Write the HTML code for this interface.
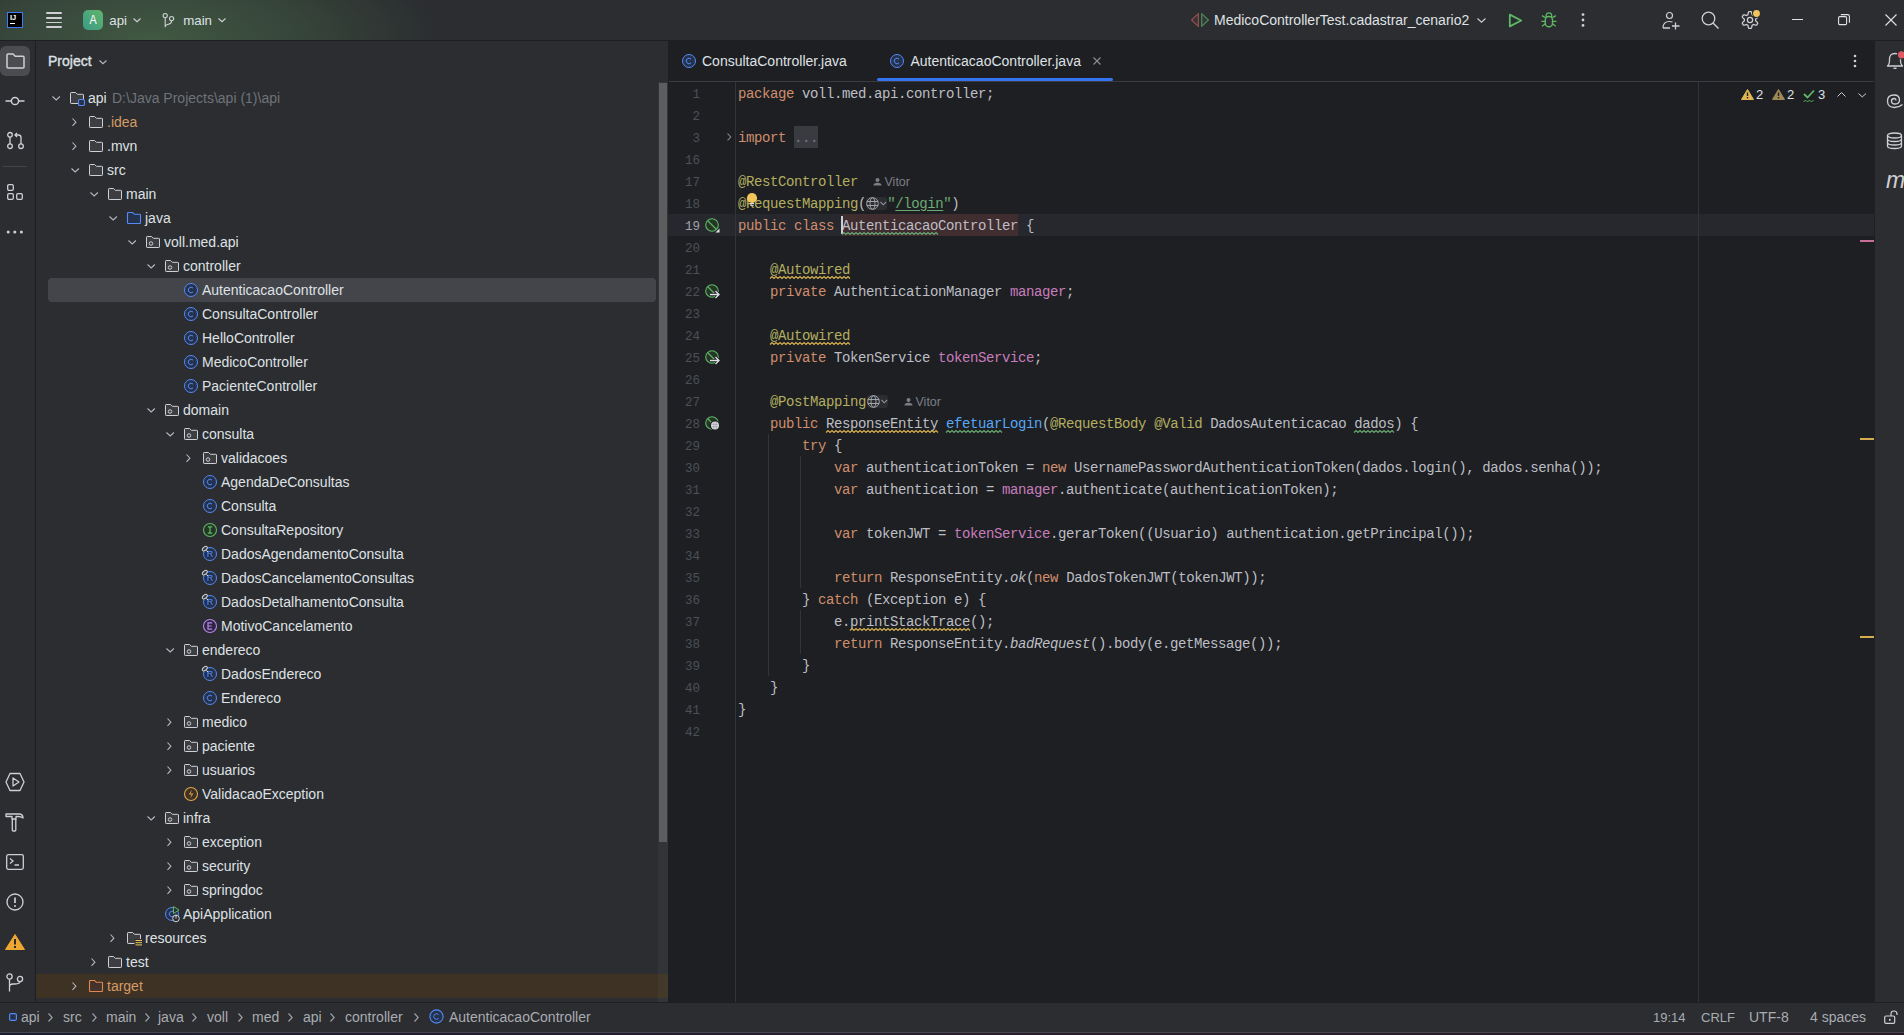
<!DOCTYPE html><html><head><meta charset="utf-8"><style>

html,body{margin:0;padding:0}
body{width:1904px;height:1035px;overflow:hidden;position:relative;background:#2B2D30;font-family:"Liberation Sans",sans-serif;font-size:14px;color:#DFE1E5}
.a{position:absolute}
.t{position:absolute;white-space:pre;line-height:16px}
svg{position:absolute;overflow:visible}
.code{position:absolute;font-family:"Liberation Mono",monospace;font-size:14px;letter-spacing:-0.4px;white-space:pre;line-height:22px;color:#BCBEC4}
.ln{position:absolute;font-family:"Liberation Mono",monospace;font-size:12.5px;white-space:pre;line-height:22px;color:#4B5059;text-align:right;width:40px}
.kw{color:#CF8E6D}.an{color:#B3AE60}.st{color:#6AAB73}.fd{color:#C77DBB}.md{color:#56A8F5}.it{font-style:italic}

</style></head><body>
<div class="a" style="left:0px;top:0px;width:1904px;height:40px;background:#2B2D30"></div>
<div class="a" style="left:0px;top:0px;width:900px;height:40px;background:radial-gradient(ellipse 290px 115px at 150px 40px, rgba(92,140,88,0.46) 0%, rgba(82,128,82,0.30) 50%, rgba(43,45,48,0) 100%)"></div>
<div class="a" style="left:0px;top:40px;width:1904px;height:1px;background:#1E1F22"></div>
<div class="a" style="left:7px;top:12px;width:16px;height:16px;background:#000;box-sizing:border-box;border:1.5px solid #3D7BF7"></div>
<div class="a" style="left:10px;top:13.5px;width:10px;height:8px;font-family:'Liberation Sans';font-weight:bold;font-size:7.5px;line-height:8px;color:#fff">IJ</div>
<div class="a" style="left:10px;top:23px;width:5px;height:1px;background:#fff"></div>
<div class="a" style="left:46px;top:12.2px;width:16px;height:1.7px;background:#CED0D6;border-radius:1px"></div>
<div class="a" style="left:46px;top:16.9px;width:16px;height:1.7px;background:#CED0D6;border-radius:1px"></div>
<div class="a" style="left:46px;top:21.5px;width:16px;height:1.7px;background:#CED0D6;border-radius:1px"></div>
<div class="a" style="left:46px;top:26.2px;width:16px;height:1.7px;background:#CED0D6;border-radius:1px"></div>
<div class="a" style="left:83px;top:10px;width:20px;height:20px;border-radius:5px;background:linear-gradient(45deg,#3A9B89,#62B46A)"></div>
<div class="t" style="left:83px;top:12px;width:20px;height:16px;text-align:center;color:#fff;font-size:13.5px;transform:scaleX(0.8)">A</div>
<div class="t" style="left:109.3px;top:12.5px;font-size:13.3px;color:#DFE1E5">api</div>
<svg style="left:133px;top:18px" width="8" height="4.0"><path d="M0.5 0.5 L4.0 3.7 L7.5 0.5" fill="none" stroke="#CED0D6" stroke-width="1.1"/></svg>
<svg style="left:161px;top:12px" width="16" height="16"><circle cx="4.2" cy="3.6" r="2.1" fill="none" stroke="#CED0D6" stroke-width="1.1"/><circle cx="10.6" cy="6.6" r="2.1" fill="none" stroke="#CED0D6" stroke-width="1.1"/><path d="M4.2 5.7 V15.2 M10.6 8.7 Q10.6 11.6 7.5 12.2 Q4.2 12.8 4.2 14.5" fill="none" stroke="#CED0D6" stroke-width="1.1"/></svg>
<div class="t" style="left:183.2px;top:12.5px;font-size:13.3px">main</div>
<svg style="left:218px;top:18px" width="8" height="4.0"><path d="M0.5 0.5 L4.0 3.7 L7.5 0.5" fill="none" stroke="#CED0D6" stroke-width="1.1"/></svg>
<svg style="left:1190px;top:12px" width="20" height="16"><path d="M8.3 1.6 L1.6 8 L8.3 14.4 Z" fill="#3A3132" stroke="#8E4F4D" stroke-width="1.3" stroke-linejoin="round"/><path d="M11.7 1.6 L18.4 8 L11.7 14.4 Z" fill="#2F3B32" stroke="#4F8257" stroke-width="1.3" stroke-linejoin="round"/></svg>
<div class="t" style="left:1214px;top:12px;">MedicoControllerTest.cadastrar_cenario2</div>
<svg style="left:1477px;top:18px" width="9" height="4.5"><path d="M0.5 0.5 L4.5 4.2 L8.5 0.5" fill="none" stroke="#CED0D6" stroke-width="1.1"/></svg>
<svg style="left:1508px;top:13px" width="15" height="15"><path d="M1.8 1.6 L13.2 7.5 L1.8 13.4 Z" fill="none" stroke="#5FB865" stroke-width="1.8" stroke-linejoin="round"/></svg>
<svg style="left:1541px;top:12px" width="16" height="16"><path d="M5 4.6 Q5 0.9 7.9 0.9 Q10.8 0.9 10.8 4.6 Z" fill="none" stroke="#5FB865" stroke-width="1.3" stroke-linejoin="round"/><rect x="4.3" y="4.4" width="7.2" height="10.4" rx="3.6" fill="none" stroke="#5FB865" stroke-width="1.4"/><path d="M0.4 9.3 H4.2 M11.6 9.3 H15.4 M1 3.6 L4.4 5.8 M14.8 3.6 L11.4 5.8 M1 14.2 L4.4 11.8 M14.8 14.2 L11.4 11.8" fill="none" stroke="#5FB865" stroke-width="1.3"/></svg>
<svg style="left:1577px;top:10px" width="12" height="20"><circle cx="6" cy="4.6" r="1.4" fill="#CED0D6"/><circle cx="6" cy="10" r="1.4" fill="#CED0D6"/><circle cx="6" cy="15.4" r="1.4" fill="#CED0D6"/></svg>
<svg style="left:1662px;top:11px" width="19" height="19"><circle cx="7.5" cy="4.5" r="3" fill="none" stroke="#CED0D6" stroke-width="1.2"/><path d="M1 17 Q1 10.5 7.5 10.5 Q9 10.5 10.5 11" fill="none" stroke="#CED0D6" stroke-width="1.2"/><path d="M1 17 H8 M13.5 11.5 V18.5 M10 15 H17.5" fill="none" stroke="#CED0D6" stroke-width="1.3"/></svg>
<svg style="left:1701px;top:11px" width="19" height="19"><circle cx="7.5" cy="7.5" r="6.3" fill="none" stroke="#CED0D6" stroke-width="1.3"/><path d="M12 12 L17.5 17.5" stroke="#CED0D6" stroke-width="1.4"/></svg>
<svg style="left:1741px;top:10px" width="19" height="20"><path d="M14.65 10.00 L14.65 10.20 L14.64 10.39 L14.62 10.59 L14.60 10.79 L14.83 11.03 L15.19 11.32 L15.57 11.64 L15.95 11.99 L16.29 12.37 L16.59 12.76 L16.74 13.13 L16.63 13.40 L16.50 13.66 L16.37 13.92 L16.23 14.17 L16.08 14.42 L15.92 14.67 L15.76 14.91 L15.58 15.14 L15.19 15.19 L14.70 15.13 L14.20 15.02 L13.71 14.87 L13.24 14.71 L12.81 14.53 L12.48 14.45 L12.32 14.57 L12.16 14.68 L11.99 14.79 L11.83 14.89 L11.65 14.99 L11.48 15.08 L11.30 15.16 L11.12 15.24 L11.02 15.56 L10.96 16.02 L10.87 16.51 L10.75 17.01 L10.59 17.50 L10.40 17.96 L10.16 18.27 L9.87 18.30 L9.58 18.33 L9.29 18.34 L9.00 18.35 L8.71 18.34 L8.42 18.33 L8.13 18.30 L7.84 18.27 L7.60 17.96 L7.41 17.50 L7.25 17.01 L7.13 16.51 L7.04 16.02 L6.98 15.56 L6.88 15.24 L6.70 15.16 L6.52 15.08 L6.35 14.99 L6.18 14.89 L6.01 14.79 L5.84 14.68 L5.68 14.57 L5.52 14.45 L5.19 14.53 L4.76 14.71 L4.29 14.87 L3.80 15.02 L3.30 15.13 L2.81 15.19 L2.42 15.14 L2.24 14.91 L2.08 14.67 L1.92 14.42 L1.77 14.17 L1.63 13.92 L1.50 13.66 L1.37 13.40 L1.26 13.13 L1.41 12.76 L1.71 12.37 L2.05 11.99 L2.43 11.64 L2.81 11.32 L3.17 11.03 L3.40 10.79 L3.38 10.59 L3.36 10.39 L3.35 10.20 L3.35 10.00 L3.35 9.80 L3.36 9.61 L3.38 9.41 L3.40 9.21 L3.17 8.97 L2.81 8.68 L2.43 8.36 L2.05 8.01 L1.71 7.63 L1.41 7.24 L1.26 6.87 L1.37 6.60 L1.50 6.34 L1.63 6.08 L1.77 5.82 L1.92 5.58 L2.08 5.33 L2.24 5.09 L2.42 4.86 L2.81 4.81 L3.30 4.87 L3.80 4.98 L4.29 5.13 L4.76 5.29 L5.19 5.47 L5.52 5.55 L5.68 5.43 L5.84 5.32 L6.01 5.21 L6.17 5.11 L6.35 5.01 L6.52 4.92 L6.70 4.84 L6.88 4.76 L6.98 4.44 L7.04 3.98 L7.13 3.49 L7.25 2.99 L7.41 2.50 L7.60 2.04 L7.84 1.73 L8.13 1.70 L8.42 1.67 L8.71 1.66 L9.00 1.65 L9.29 1.66 L9.58 1.67 L9.87 1.70 L10.16 1.73 L10.40 2.04 L10.59 2.50 L10.75 2.99 L10.87 3.49 L10.96 3.98 L11.02 4.44 L11.12 4.76 L11.30 4.84 L11.48 4.92 L11.65 5.01 L11.83 5.11 L11.99 5.21 L12.16 5.32 L12.32 5.43 L12.48 5.55 L12.81 5.47 L13.24 5.29 L13.71 5.13 L14.20 4.98 L14.70 4.87 L15.19 4.81 L15.58 4.86 L15.76 5.09 L15.92 5.33 L16.08 5.58 L16.23 5.82 L16.37 6.08 L16.50 6.34 L16.63 6.60 L16.74 6.87 L16.59 7.24 L16.29 7.63 L15.95 8.01 L15.57 8.36 L15.19 8.68 L14.83 8.97 L14.60 9.21 L14.62 9.41 L14.64 9.61 L14.65 9.80 Z" fill="none" stroke="#CED0D6" stroke-width="1.25" stroke-linejoin="round"/><circle cx="9" cy="10" r="2.6" fill="none" stroke="#CED0D6" stroke-width="1.25"/><circle cx="15.5" cy="3.5" r="4.4" fill="#2B2D30"/><circle cx="15.5" cy="3.5" r="3.4" fill="#F2C55C"/></svg>
<div class="a" style="left:1792px;top:19px;width:10.5px;height:1.2px;background:#DFE1E5"></div>
<svg style="left:1838px;top:14px" width="12" height="12"><rect x="0.6" y="2.6" width="8" height="8" rx="1.2" fill="none" stroke="#DFE1E5" stroke-width="1.1"/><path d="M2.8 0.6 H9.5 Q11.4 0.6 11.4 2.5 V8.8" fill="none" stroke="#DFE1E5" stroke-width="1.1"/></svg>
<svg style="left:1885px;top:14px" width="12" height="12"><path d="M0.5 0.5 L11.5 11.5 M11.5 0.5 L0.5 11.5" stroke="#DFE1E5" stroke-width="1.1"/></svg>
<div class="a" style="left:35px;top:41px;width:1px;height:962px;background:#1E1F22"></div>
<div class="a" style="left:0px;top:46px;width:30px;height:30px;background:#4A4C50;border-radius:6px"></div>
<svg style="left:6px;top:53px" width="19" height="16"><path d="M1 2 Q1 1 2 1 H7 L9.3 3.3 H17 Q18 3.3 18 4.3 V14 Q18 15 17 15 H2 Q1 15 1 14 Z" fill="none" stroke="#CED0D6" stroke-width="1.5"/></svg>
<svg style="left:5px;top:93px" width="20" height="16"><circle cx="10" cy="8" r="3.6" fill="none" stroke="#CED0D6" stroke-width="1.5"/><path d="M0.5 8 H6.4 M13.6 8 H19.5" stroke="#CED0D6" stroke-width="1.5"/></svg>
<svg style="left:7px;top:132px" width="18" height="18"><circle cx="3" cy="2.8" r="2.3" fill="none" stroke="#CED0D6" stroke-width="1.3"/><circle cx="3" cy="14.2" r="2.3" fill="none" stroke="#CED0D6" stroke-width="1.3"/><circle cx="14" cy="14.2" r="2.3" fill="none" stroke="#CED0D6" stroke-width="1.3"/><path d="M3 5.1 V11.9 M14 11.9 V5.5 Q14 3 11.5 3 H8 M10 1 L8 3 L10 5" fill="none" stroke="#CED0D6" stroke-width="1.3"/></svg>
<div class="a" style="left:3px;top:166px;width:24px;height:1px;background:#43454A"></div>
<svg style="left:7px;top:184px" width="17" height="17"><rect x="0.7" y="0.7" width="5.6" height="5.6" rx="1.2" fill="none" stroke="#CED0D6" stroke-width="1.3"/><rect x="0.7" y="9.7" width="5.6" height="5.6" rx="1.2" fill="none" stroke="#CED0D6" stroke-width="1.3"/><rect x="9.7" y="9.7" width="5.6" height="5.6" rx="1.2" fill="none" stroke="#CED0D6" stroke-width="1.3"/></svg>
<svg style="left:0px;top:226px" width="30" height="12"><circle cx="8.2" cy="6" r="1.5" fill="#CED0D6"/><circle cx="14.8" cy="6" r="1.5" fill="#CED0D6"/><circle cx="21.4" cy="6" r="1.5" fill="#CED0D6"/></svg>
<svg style="left:5px;top:772px" width="20" height="20"><path d="M5 1.5 H15 L19 10 L15 18.5 H5 L1 10 Z" fill="none" stroke="#CED0D6" stroke-width="1.3" stroke-linejoin="round"/><path d="M8 6 L14 10 L8 14 Z" fill="none" stroke="#CED0D6" stroke-width="1.3" stroke-linejoin="round"/></svg>
<svg style="left:5px;top:813px" width="19" height="19"><path d="M1 1 H14 Q18 1 18 5 Q16 3.5 13 3.5 H11 V6 H7 V3.5 H1 Z" fill="none" stroke="#CED0D6" stroke-width="1.3" stroke-linejoin="round"/><path d="M7.3 6 V17 Q7.3 18 8.3 18 H9.8 Q10.8 18 10.8 17 V6" fill="none" stroke="#CED0D6" stroke-width="1.3"/></svg>
<svg style="left:6px;top:854px" width="18" height="16"><rect x="0.7" y="0.7" width="16.6" height="14.6" rx="1.5" fill="none" stroke="#CED0D6" stroke-width="1.3"/><path d="M4 4.5 L7 7 L4 9.5 M8.5 11 H13" fill="none" stroke="#CED0D6" stroke-width="1.3"/></svg>
<svg style="left:6px;top:893px" width="18" height="18"><circle cx="9" cy="9" r="8" fill="none" stroke="#CED0D6" stroke-width="1.3"/><path d="M9 4.5 V10" stroke="#CED0D6" stroke-width="1.7"/><circle cx="9" cy="13" r="1" fill="#CED0D6"/></svg>
<svg style="left:5px;top:934px" width="20" height="16"><path d="M10 0.5 L19.5 15.5 H0.5 Z" fill="#F0A732" stroke="#F0A732" stroke-width="1" stroke-linejoin="round"/><path d="M10 5 V10.5" stroke="#2B2D30" stroke-width="2"/><rect x="9" y="12" width="2" height="2" fill="#2B2D30"/></svg>
<svg style="left:6px;top:973px" width="18" height="19"><circle cx="3.5" cy="3.5" r="2.6" fill="none" stroke="#CED0D6" stroke-width="1.3"/><circle cx="14" cy="6" r="2.6" fill="none" stroke="#CED0D6" stroke-width="1.3"/><path d="M3.5 6.1 V18.5 M3.5 14 Q3.5 11 7 11 H9 Q14 11 14 8.6" fill="none" stroke="#CED0D6" stroke-width="1.3"/></svg>
<div class="t" style="left:48px;top:53px;-webkit-text-stroke:0.35px #DFE1E5;color:#DFE1E5">Project</div>
<svg style="left:99px;top:60px" width="8" height="4.0"><path d="M0.5 0.5 L4.0 3.7 L7.5 0.5" fill="none" stroke="#B4B8BF" stroke-width="1.1"/></svg>
<svg style="left:51.8px;top:96px" width="8.4" height="4.2"><path d="M0.5 0.5 L4.2 3.9000000000000004 L7.9 0.5" fill="none" stroke="#B4B8BF" stroke-width="1.1"/></svg>
<svg style="left:69px;top:90px" width="16" height="16"><path d="M1.5 3.2 Q1.5 2.5 2.2 2.5 H6.6 L8.4 4.3 H13.8 Q14.5 4.3 14.5 5 V12.8 Q14.5 13.5 13.8 13.5 H2.2 Q1.5 13.5 1.5 12.8 Z" fill="#3C3E42" stroke="#CED0D6" stroke-width="1"/><rect x="9.5" y="9.5" width="6" height="6" rx="1.3" fill="#25324D" stroke="#548AF7" stroke-width="1.1"/></svg>
<div class="t" style="left:88px;top:90px;color:#DFE1E5">api</div>
<div class="t" style="left:112px;top:90px;color:#6F737A">D:\Java Projects\api (1)\api</div>
<svg style="left:71.7px;top:118px" width="4.2" height="8.4"><path d="M0.5 0.5 L3.9000000000000004 4.2 L0.5 7.9" fill="none" stroke="#B4B8BF" stroke-width="1.1"/></svg>
<svg style="left:88px;top:114px" width="16" height="16"><path d="M1.5 3.2 Q1.5 2.5 2.2 2.5 H6.6 L8.4 4.3 H13.8 Q14.5 4.3 14.5 5 V12.8 Q14.5 13.5 13.8 13.5 H2.2 Q1.5 13.5 1.5 12.8 Z" fill="#3C3E42" stroke="#CED0D6" stroke-width="1"/></svg>
<div class="t" style="left:107px;top:114px;color:#D59B63">.idea</div>
<svg style="left:71.7px;top:142px" width="4.2" height="8.4"><path d="M0.5 0.5 L3.9000000000000004 4.2 L0.5 7.9" fill="none" stroke="#B4B8BF" stroke-width="1.1"/></svg>
<svg style="left:88px;top:138px" width="16" height="16"><path d="M1.5 3.2 Q1.5 2.5 2.2 2.5 H6.6 L8.4 4.3 H13.8 Q14.5 4.3 14.5 5 V12.8 Q14.5 13.5 13.8 13.5 H2.2 Q1.5 13.5 1.5 12.8 Z" fill="#3C3E42" stroke="#CED0D6" stroke-width="1"/></svg>
<div class="t" style="left:107px;top:138px;color:#DFE1E5">.mvn</div>
<svg style="left:70.8px;top:168px" width="8.4" height="4.2"><path d="M0.5 0.5 L4.2 3.9000000000000004 L7.9 0.5" fill="none" stroke="#B4B8BF" stroke-width="1.1"/></svg>
<svg style="left:88px;top:162px" width="16" height="16"><path d="M1.5 3.2 Q1.5 2.5 2.2 2.5 H6.6 L8.4 4.3 H13.8 Q14.5 4.3 14.5 5 V12.8 Q14.5 13.5 13.8 13.5 H2.2 Q1.5 13.5 1.5 12.8 Z" fill="#3C3E42" stroke="#CED0D6" stroke-width="1"/></svg>
<div class="t" style="left:107px;top:162px;color:#DFE1E5">src</div>
<svg style="left:89.8px;top:192px" width="8.4" height="4.2"><path d="M0.5 0.5 L4.2 3.9000000000000004 L7.9 0.5" fill="none" stroke="#B4B8BF" stroke-width="1.1"/></svg>
<svg style="left:107px;top:186px" width="16" height="16"><path d="M1.5 3.2 Q1.5 2.5 2.2 2.5 H6.6 L8.4 4.3 H13.8 Q14.5 4.3 14.5 5 V12.8 Q14.5 13.5 13.8 13.5 H2.2 Q1.5 13.5 1.5 12.8 Z" fill="#3C3E42" stroke="#CED0D6" stroke-width="1"/></svg>
<div class="t" style="left:126px;top:186px;color:#DFE1E5">main</div>
<svg style="left:108.8px;top:216px" width="8.4" height="4.2"><path d="M0.5 0.5 L4.2 3.9000000000000004 L7.9 0.5" fill="none" stroke="#B4B8BF" stroke-width="1.1"/></svg>
<svg style="left:126px;top:210px" width="16" height="16"><path d="M1.5 3.2 Q1.5 2.5 2.2 2.5 H6.6 L8.4 4.3 H13.8 Q14.5 4.3 14.5 5 V12.8 Q14.5 13.5 13.8 13.5 H2.2 Q1.5 13.5 1.5 12.8 Z" fill="#25324D" stroke="#548AF7" stroke-width="1.1"/></svg>
<div class="t" style="left:145px;top:210px;color:#DFE1E5">java</div>
<svg style="left:127.8px;top:240px" width="8.4" height="4.2"><path d="M0.5 0.5 L4.2 3.9000000000000004 L7.9 0.5" fill="none" stroke="#B4B8BF" stroke-width="1.1"/></svg>
<svg style="left:145px;top:234px" width="16" height="16"><path d="M1.5 3.2 Q1.5 2.5 2.2 2.5 H6.6 L8.4 4.3 H13.8 Q14.5 4.3 14.5 5 V12.8 Q14.5 13.5 13.8 13.5 H2.2 Q1.5 13.5 1.5 12.8 Z" fill="#3C3E42" stroke="#CED0D6" stroke-width="1"/><circle cx="6" cy="9.5" r="1.75" fill="none" stroke="#CED0D6" stroke-width="1"/></svg>
<div class="t" style="left:164px;top:234px;color:#DFE1E5">voll.med.api</div>
<svg style="left:146.8px;top:264px" width="8.4" height="4.2"><path d="M0.5 0.5 L4.2 3.9000000000000004 L7.9 0.5" fill="none" stroke="#B4B8BF" stroke-width="1.1"/></svg>
<svg style="left:164px;top:258px" width="16" height="16"><path d="M1.5 3.2 Q1.5 2.5 2.2 2.5 H6.6 L8.4 4.3 H13.8 Q14.5 4.3 14.5 5 V12.8 Q14.5 13.5 13.8 13.5 H2.2 Q1.5 13.5 1.5 12.8 Z" fill="#3C3E42" stroke="#CED0D6" stroke-width="1"/><circle cx="6" cy="9.5" r="1.75" fill="none" stroke="#CED0D6" stroke-width="1"/></svg>
<div class="t" style="left:183px;top:258px;color:#DFE1E5">controller</div>
<div class="a" style="left:48px;top:278px;width:608px;height:24px;background:#43454A;border-radius:4px"></div>
<svg style="left:183px;top:282px" width="16" height="16"><circle cx="8" cy="8" r="6.5" fill="#25324D" stroke="#548AF7" stroke-width="1"/><path d="M10 6.1 A2.75 2.75 0 1 0 10 9.9" fill="none" stroke="#548AF7" stroke-width="1"/></svg>
<div class="t" style="left:202px;top:282px;color:#DFE1E5">AutenticacaoController</div>
<svg style="left:183px;top:306px" width="16" height="16"><circle cx="8" cy="8" r="6.5" fill="#25324D" stroke="#548AF7" stroke-width="1"/><path d="M10 6.1 A2.75 2.75 0 1 0 10 9.9" fill="none" stroke="#548AF7" stroke-width="1"/></svg>
<div class="t" style="left:202px;top:306px;color:#DFE1E5">ConsultaController</div>
<svg style="left:183px;top:330px" width="16" height="16"><circle cx="8" cy="8" r="6.5" fill="#25324D" stroke="#548AF7" stroke-width="1"/><path d="M10 6.1 A2.75 2.75 0 1 0 10 9.9" fill="none" stroke="#548AF7" stroke-width="1"/></svg>
<div class="t" style="left:202px;top:330px;color:#DFE1E5">HelloController</div>
<svg style="left:183px;top:354px" width="16" height="16"><circle cx="8" cy="8" r="6.5" fill="#25324D" stroke="#548AF7" stroke-width="1"/><path d="M10 6.1 A2.75 2.75 0 1 0 10 9.9" fill="none" stroke="#548AF7" stroke-width="1"/></svg>
<div class="t" style="left:202px;top:354px;color:#DFE1E5">MedicoController</div>
<svg style="left:183px;top:378px" width="16" height="16"><circle cx="8" cy="8" r="6.5" fill="#25324D" stroke="#548AF7" stroke-width="1"/><path d="M10 6.1 A2.75 2.75 0 1 0 10 9.9" fill="none" stroke="#548AF7" stroke-width="1"/></svg>
<div class="t" style="left:202px;top:378px;color:#DFE1E5">PacienteController</div>
<svg style="left:146.8px;top:408px" width="8.4" height="4.2"><path d="M0.5 0.5 L4.2 3.9000000000000004 L7.9 0.5" fill="none" stroke="#B4B8BF" stroke-width="1.1"/></svg>
<svg style="left:164px;top:402px" width="16" height="16"><path d="M1.5 3.2 Q1.5 2.5 2.2 2.5 H6.6 L8.4 4.3 H13.8 Q14.5 4.3 14.5 5 V12.8 Q14.5 13.5 13.8 13.5 H2.2 Q1.5 13.5 1.5 12.8 Z" fill="#3C3E42" stroke="#CED0D6" stroke-width="1"/><circle cx="6" cy="9.5" r="1.75" fill="none" stroke="#CED0D6" stroke-width="1"/></svg>
<div class="t" style="left:183px;top:402px;color:#DFE1E5">domain</div>
<svg style="left:165.8px;top:432px" width="8.4" height="4.2"><path d="M0.5 0.5 L4.2 3.9000000000000004 L7.9 0.5" fill="none" stroke="#B4B8BF" stroke-width="1.1"/></svg>
<svg style="left:183px;top:426px" width="16" height="16"><path d="M1.5 3.2 Q1.5 2.5 2.2 2.5 H6.6 L8.4 4.3 H13.8 Q14.5 4.3 14.5 5 V12.8 Q14.5 13.5 13.8 13.5 H2.2 Q1.5 13.5 1.5 12.8 Z" fill="#3C3E42" stroke="#CED0D6" stroke-width="1"/><circle cx="6" cy="9.5" r="1.75" fill="none" stroke="#CED0D6" stroke-width="1"/></svg>
<div class="t" style="left:202px;top:426px;color:#DFE1E5">consulta</div>
<svg style="left:185.7px;top:454px" width="4.2" height="8.4"><path d="M0.5 0.5 L3.9000000000000004 4.2 L0.5 7.9" fill="none" stroke="#B4B8BF" stroke-width="1.1"/></svg>
<svg style="left:202px;top:450px" width="16" height="16"><path d="M1.5 3.2 Q1.5 2.5 2.2 2.5 H6.6 L8.4 4.3 H13.8 Q14.5 4.3 14.5 5 V12.8 Q14.5 13.5 13.8 13.5 H2.2 Q1.5 13.5 1.5 12.8 Z" fill="#3C3E42" stroke="#CED0D6" stroke-width="1"/><circle cx="6" cy="9.5" r="1.75" fill="none" stroke="#CED0D6" stroke-width="1"/></svg>
<div class="t" style="left:221px;top:450px;color:#DFE1E5">validacoes</div>
<svg style="left:202px;top:474px" width="16" height="16"><circle cx="8" cy="8" r="6.5" fill="#25324D" stroke="#548AF7" stroke-width="1"/><path d="M10 6.1 A2.75 2.75 0 1 0 10 9.9" fill="none" stroke="#548AF7" stroke-width="1"/></svg>
<div class="t" style="left:221px;top:474px;color:#DFE1E5">AgendaDeConsultas</div>
<svg style="left:202px;top:498px" width="16" height="16"><circle cx="8" cy="8" r="6.5" fill="#25324D" stroke="#548AF7" stroke-width="1"/><path d="M10 6.1 A2.75 2.75 0 1 0 10 9.9" fill="none" stroke="#548AF7" stroke-width="1"/></svg>
<div class="t" style="left:221px;top:498px;color:#DFE1E5">Consulta</div>
<svg style="left:202px;top:522px" width="16" height="16"><circle cx="8" cy="8" r="6.5" fill="#253627" stroke="#5FB865" stroke-width="1.1"/><path d="M5.8 4.8 H10.2 M5.8 11.2 H10.2 M8 4.8 V11.2" stroke="#5FB865" stroke-width="1.2"/></svg>
<div class="t" style="left:221px;top:522px;color:#DFE1E5">ConsultaRepository</div>
<svg style="left:202px;top:546px" width="16" height="16"><circle cx="8" cy="8" r="6.5" fill="#25324D" stroke="#548AF7" stroke-width="1"/><text x="8" y="11.3" text-anchor="middle" font-family="Liberation Sans" font-size="9" fill="#548AF7">R</text><path d="M4.3 4.3 L6.2 6.2" stroke="#DFE1E5" stroke-width="1"/><ellipse cx="2.8" cy="2.6" rx="2.9" ry="1.7" transform="rotate(-40 2.8 2.6)" fill="#3A3C40" stroke="#CED0D6" stroke-width="1"/></svg>
<div class="t" style="left:221px;top:546px;color:#DFE1E5">DadosAgendamentoConsulta</div>
<svg style="left:202px;top:570px" width="16" height="16"><circle cx="8" cy="8" r="6.5" fill="#25324D" stroke="#548AF7" stroke-width="1"/><text x="8" y="11.3" text-anchor="middle" font-family="Liberation Sans" font-size="9" fill="#548AF7">R</text><path d="M4.3 4.3 L6.2 6.2" stroke="#DFE1E5" stroke-width="1"/><ellipse cx="2.8" cy="2.6" rx="2.9" ry="1.7" transform="rotate(-40 2.8 2.6)" fill="#3A3C40" stroke="#CED0D6" stroke-width="1"/></svg>
<div class="t" style="left:221px;top:570px;color:#DFE1E5">DadosCancelamentoConsultas</div>
<svg style="left:202px;top:594px" width="16" height="16"><circle cx="8" cy="8" r="6.5" fill="#25324D" stroke="#548AF7" stroke-width="1"/><text x="8" y="11.3" text-anchor="middle" font-family="Liberation Sans" font-size="9" fill="#548AF7">R</text><path d="M4.3 4.3 L6.2 6.2" stroke="#DFE1E5" stroke-width="1"/><ellipse cx="2.8" cy="2.6" rx="2.9" ry="1.7" transform="rotate(-40 2.8 2.6)" fill="#3A3C40" stroke="#CED0D6" stroke-width="1"/></svg>
<div class="t" style="left:221px;top:594px;color:#DFE1E5">DadosDetalhamentoConsulta</div>
<svg style="left:202px;top:618px" width="16" height="16"><circle cx="8" cy="8" r="6.5" fill="#2F2542" stroke="#B589EC" stroke-width="1.1"/><path d="M10.2 4.8 H6 V11.2 H10.2 M6 8 H9.6" fill="none" stroke="#B589EC" stroke-width="1.2"/></svg>
<div class="t" style="left:221px;top:618px;color:#DFE1E5">MotivoCancelamento</div>
<svg style="left:165.8px;top:648px" width="8.4" height="4.2"><path d="M0.5 0.5 L4.2 3.9000000000000004 L7.9 0.5" fill="none" stroke="#B4B8BF" stroke-width="1.1"/></svg>
<svg style="left:183px;top:642px" width="16" height="16"><path d="M1.5 3.2 Q1.5 2.5 2.2 2.5 H6.6 L8.4 4.3 H13.8 Q14.5 4.3 14.5 5 V12.8 Q14.5 13.5 13.8 13.5 H2.2 Q1.5 13.5 1.5 12.8 Z" fill="#3C3E42" stroke="#CED0D6" stroke-width="1"/><circle cx="6" cy="9.5" r="1.75" fill="none" stroke="#CED0D6" stroke-width="1"/></svg>
<div class="t" style="left:202px;top:642px;color:#DFE1E5">endereco</div>
<svg style="left:202px;top:666px" width="16" height="16"><circle cx="8" cy="8" r="6.5" fill="#25324D" stroke="#548AF7" stroke-width="1"/><text x="8" y="11.3" text-anchor="middle" font-family="Liberation Sans" font-size="9" fill="#548AF7">R</text><path d="M4.3 4.3 L6.2 6.2" stroke="#DFE1E5" stroke-width="1"/><ellipse cx="2.8" cy="2.6" rx="2.9" ry="1.7" transform="rotate(-40 2.8 2.6)" fill="#3A3C40" stroke="#CED0D6" stroke-width="1"/></svg>
<div class="t" style="left:221px;top:666px;color:#DFE1E5">DadosEndereco</div>
<svg style="left:202px;top:690px" width="16" height="16"><circle cx="8" cy="8" r="6.5" fill="#25324D" stroke="#548AF7" stroke-width="1"/><path d="M10 6.1 A2.75 2.75 0 1 0 10 9.9" fill="none" stroke="#548AF7" stroke-width="1"/></svg>
<div class="t" style="left:221px;top:690px;color:#DFE1E5">Endereco</div>
<svg style="left:166.7px;top:718px" width="4.2" height="8.4"><path d="M0.5 0.5 L3.9000000000000004 4.2 L0.5 7.9" fill="none" stroke="#B4B8BF" stroke-width="1.1"/></svg>
<svg style="left:183px;top:714px" width="16" height="16"><path d="M1.5 3.2 Q1.5 2.5 2.2 2.5 H6.6 L8.4 4.3 H13.8 Q14.5 4.3 14.5 5 V12.8 Q14.5 13.5 13.8 13.5 H2.2 Q1.5 13.5 1.5 12.8 Z" fill="#3C3E42" stroke="#CED0D6" stroke-width="1"/><circle cx="6" cy="9.5" r="1.75" fill="none" stroke="#CED0D6" stroke-width="1"/></svg>
<div class="t" style="left:202px;top:714px;color:#DFE1E5">medico</div>
<svg style="left:166.7px;top:742px" width="4.2" height="8.4"><path d="M0.5 0.5 L3.9000000000000004 4.2 L0.5 7.9" fill="none" stroke="#B4B8BF" stroke-width="1.1"/></svg>
<svg style="left:183px;top:738px" width="16" height="16"><path d="M1.5 3.2 Q1.5 2.5 2.2 2.5 H6.6 L8.4 4.3 H13.8 Q14.5 4.3 14.5 5 V12.8 Q14.5 13.5 13.8 13.5 H2.2 Q1.5 13.5 1.5 12.8 Z" fill="#3C3E42" stroke="#CED0D6" stroke-width="1"/><circle cx="6" cy="9.5" r="1.75" fill="none" stroke="#CED0D6" stroke-width="1"/></svg>
<div class="t" style="left:202px;top:738px;color:#DFE1E5">paciente</div>
<svg style="left:166.7px;top:766px" width="4.2" height="8.4"><path d="M0.5 0.5 L3.9000000000000004 4.2 L0.5 7.9" fill="none" stroke="#B4B8BF" stroke-width="1.1"/></svg>
<svg style="left:183px;top:762px" width="16" height="16"><path d="M1.5 3.2 Q1.5 2.5 2.2 2.5 H6.6 L8.4 4.3 H13.8 Q14.5 4.3 14.5 5 V12.8 Q14.5 13.5 13.8 13.5 H2.2 Q1.5 13.5 1.5 12.8 Z" fill="#3C3E42" stroke="#CED0D6" stroke-width="1"/><circle cx="6" cy="9.5" r="1.75" fill="none" stroke="#CED0D6" stroke-width="1"/></svg>
<div class="t" style="left:202px;top:762px;color:#DFE1E5">usuarios</div>
<svg style="left:183px;top:786px" width="16" height="16"><circle cx="8" cy="8" r="6.5" fill="#3D3223" stroke="#E0A34C" stroke-width="1.1"/><path d="M9 3.5 L5.8 8.6 H8.6 L7.2 12.5 L10.4 7.4 H7.6 Z" fill="#E0A34C"/></svg>
<div class="t" style="left:202px;top:786px;color:#DFE1E5">ValidacaoException</div>
<svg style="left:146.8px;top:816px" width="8.4" height="4.2"><path d="M0.5 0.5 L4.2 3.9000000000000004 L7.9 0.5" fill="none" stroke="#B4B8BF" stroke-width="1.1"/></svg>
<svg style="left:164px;top:810px" width="16" height="16"><path d="M1.5 3.2 Q1.5 2.5 2.2 2.5 H6.6 L8.4 4.3 H13.8 Q14.5 4.3 14.5 5 V12.8 Q14.5 13.5 13.8 13.5 H2.2 Q1.5 13.5 1.5 12.8 Z" fill="#3C3E42" stroke="#CED0D6" stroke-width="1"/><circle cx="6" cy="9.5" r="1.75" fill="none" stroke="#CED0D6" stroke-width="1"/></svg>
<div class="t" style="left:183px;top:810px;color:#DFE1E5">infra</div>
<svg style="left:166.7px;top:838px" width="4.2" height="8.4"><path d="M0.5 0.5 L3.9000000000000004 4.2 L0.5 7.9" fill="none" stroke="#B4B8BF" stroke-width="1.1"/></svg>
<svg style="left:183px;top:834px" width="16" height="16"><path d="M1.5 3.2 Q1.5 2.5 2.2 2.5 H6.6 L8.4 4.3 H13.8 Q14.5 4.3 14.5 5 V12.8 Q14.5 13.5 13.8 13.5 H2.2 Q1.5 13.5 1.5 12.8 Z" fill="#3C3E42" stroke="#CED0D6" stroke-width="1"/><circle cx="6" cy="9.5" r="1.75" fill="none" stroke="#CED0D6" stroke-width="1"/></svg>
<div class="t" style="left:202px;top:834px;color:#DFE1E5">exception</div>
<svg style="left:166.7px;top:862px" width="4.2" height="8.4"><path d="M0.5 0.5 L3.9000000000000004 4.2 L0.5 7.9" fill="none" stroke="#B4B8BF" stroke-width="1.1"/></svg>
<svg style="left:183px;top:858px" width="16" height="16"><path d="M1.5 3.2 Q1.5 2.5 2.2 2.5 H6.6 L8.4 4.3 H13.8 Q14.5 4.3 14.5 5 V12.8 Q14.5 13.5 13.8 13.5 H2.2 Q1.5 13.5 1.5 12.8 Z" fill="#3C3E42" stroke="#CED0D6" stroke-width="1"/><circle cx="6" cy="9.5" r="1.75" fill="none" stroke="#CED0D6" stroke-width="1"/></svg>
<div class="t" style="left:202px;top:858px;color:#DFE1E5">security</div>
<svg style="left:166.7px;top:886px" width="4.2" height="8.4"><path d="M0.5 0.5 L3.9000000000000004 4.2 L0.5 7.9" fill="none" stroke="#B4B8BF" stroke-width="1.1"/></svg>
<svg style="left:183px;top:882px" width="16" height="16"><path d="M1.5 3.2 Q1.5 2.5 2.2 2.5 H6.6 L8.4 4.3 H13.8 Q14.5 4.3 14.5 5 V12.8 Q14.5 13.5 13.8 13.5 H2.2 Q1.5 13.5 1.5 12.8 Z" fill="#3C3E42" stroke="#CED0D6" stroke-width="1"/><circle cx="6" cy="9.5" r="1.75" fill="none" stroke="#CED0D6" stroke-width="1"/></svg>
<div class="t" style="left:202px;top:882px;color:#DFE1E5">springdoc</div>
<svg style="left:164px;top:906px" width="16" height="16"><circle cx="8" cy="8" r="6.5" fill="#25324D" stroke="#548AF7" stroke-width="1"/><path d="M10 6.1 A2.75 2.75 0 1 0 10 9.9" fill="none" stroke="#548AF7" stroke-width="1"/><path d="M9.5 0.5 L15 4 L9.5 7.5 Z" fill="#2B2D30" stroke="#5FB865" stroke-width="1"/><circle cx="12" cy="12.5" r="3.3" fill="#2B2D30" stroke="#CED0D6" stroke-width="1"/><path d="M12 8.5 V12.5" stroke="#CED0D6" stroke-width="1"/></svg>
<div class="t" style="left:183px;top:906px;color:#DFE1E5">ApiApplication</div>
<svg style="left:109.7px;top:934px" width="4.2" height="8.4"><path d="M0.5 0.5 L3.9000000000000004 4.2 L0.5 7.9" fill="none" stroke="#B4B8BF" stroke-width="1.1"/></svg>
<svg style="left:126px;top:930px" width="16" height="16"><path d="M1.5 3.2 Q1.5 2.5 2.2 2.5 H6.6 L8.4 4.3 H13.8 Q14.5 4.3 14.5 5 V12.8 Q14.5 13.5 13.8 13.5 H2.2 Q1.5 13.5 1.5 12.8 Z" fill="#3C3E42" stroke="#CED0D6" stroke-width="1"/><rect x="8.5" y="9" width="8" height="7.5" fill="#2B2D30"/><path d="M9.5 10.5 H16 M9.5 12.7 H16 M9.5 14.9 H16" stroke="#F2C55C" stroke-width="1"/></svg>
<div class="t" style="left:145px;top:930px;color:#DFE1E5">resources</div>
<svg style="left:90.7px;top:958px" width="4.2" height="8.4"><path d="M0.5 0.5 L3.9000000000000004 4.2 L0.5 7.9" fill="none" stroke="#B4B8BF" stroke-width="1.1"/></svg>
<svg style="left:107px;top:954px" width="16" height="16"><path d="M1.5 3.2 Q1.5 2.5 2.2 2.5 H6.6 L8.4 4.3 H13.8 Q14.5 4.3 14.5 5 V12.8 Q14.5 13.5 13.8 13.5 H2.2 Q1.5 13.5 1.5 12.8 Z" fill="#3C3E42" stroke="#CED0D6" stroke-width="1"/></svg>
<div class="t" style="left:126px;top:954px;color:#DFE1E5">test</div>
<div class="a" style="left:36px;top:974px;width:632px;height:24px;background:#3D3224"></div>
<svg style="left:71.7px;top:982px" width="4.2" height="8.4"><path d="M0.5 0.5 L3.9000000000000004 4.2 L0.5 7.9" fill="none" stroke="#B4B8BF" stroke-width="1.1"/></svg>
<svg style="left:88px;top:978px" width="16" height="16"><path d="M1.5 3.2 Q1.5 2.5 2.2 2.5 H6.6 L8.4 4.3 H13.8 Q14.5 4.3 14.5 5 V12.8 Q14.5 13.5 13.8 13.5 H2.2 Q1.5 13.5 1.5 12.8 Z" fill="#45322A" stroke="#E08855" stroke-width="1.1"/></svg>
<div class="t" style="left:107px;top:978px;color:#D89A66">target</div>
<div class="a" style="left:658px;top:82px;width:10px;height:920px;background:rgba(255,255,255,0.035)"></div>
<div class="a" style="left:659px;top:83px;width:8px;height:759px;background:#5C5D5F"></div>
<div class="a" style="left:668px;top:41px;width:1207px;height:961px;background:#1E1F22"></div>
<div class="a" style="left:669px;top:81px;width:1205px;height:1px;background:#393B40"></div>
<svg style="left:681px;top:53px" width="16" height="16"><circle cx="8" cy="8" r="6.5" fill="#25324D" stroke="#548AF7" stroke-width="1"/><path d="M10 6.1 A2.75 2.75 0 1 0 10 9.9" fill="none" stroke="#548AF7" stroke-width="1"/></svg>
<div class="t" style="left:702px;top:53px;">ConsultaController.java</div>
<svg style="left:889px;top:53px" width="16" height="16"><circle cx="8" cy="8" r="6.5" fill="#25324D" stroke="#548AF7" stroke-width="1"/><path d="M10 6.1 A2.75 2.75 0 1 0 10 9.9" fill="none" stroke="#548AF7" stroke-width="1"/></svg>
<div class="t" style="left:910.5px;top:53px;">AutenticacaoController.java</div>
<svg style="left:1093px;top:57px" width="8" height="8"><path d="M0.5 0.5 L7.5 7.5 M7.5 0.5 L0.5 7.5" stroke="#8C8F94" stroke-width="1.1"/></svg>
<div class="a" style="left:877px;top:78px;width:236px;height:3px;background:#3574F0;border-radius:1.5px"></div>
<svg style="left:1849px;top:51px" width="12" height="20"><circle cx="6" cy="5" r="1.3" fill="#CED0D6"/><circle cx="6" cy="10" r="1.3" fill="#CED0D6"/><circle cx="6" cy="15" r="1.3" fill="#CED0D6"/></svg>
<div class="a" style="left:668px;top:214px;width:1030px;height:22px;background:#26282E"></div>
<div class="a" style="left:1699px;top:214px;width:176px;height:22px;background:#26282E"></div>
<div class="a" style="left:735px;top:82px;width:1px;height:920px;background:#313438"></div>
<div class="a" style="left:1698px;top:82px;width:1px;height:920px;background:#313438"></div>
<div class="ln" style="left:660px;top:84px;color:#4B5059">1</div>
<div class="ln" style="left:660px;top:106px;color:#4B5059">2</div>
<div class="ln" style="left:660px;top:128px;color:#4B5059">3</div>
<div class="ln" style="left:660px;top:150px;color:#4B5059">16</div>
<div class="ln" style="left:660px;top:172px;color:#4B5059">17</div>
<div class="ln" style="left:660px;top:194px;color:#4B5059">18</div>
<div class="ln" style="left:660px;top:216px;color:#A1A3AB">19</div>
<div class="ln" style="left:660px;top:238px;color:#4B5059">20</div>
<div class="ln" style="left:660px;top:260px;color:#4B5059">21</div>
<div class="ln" style="left:660px;top:282px;color:#4B5059">22</div>
<div class="ln" style="left:660px;top:304px;color:#4B5059">23</div>
<div class="ln" style="left:660px;top:326px;color:#4B5059">24</div>
<div class="ln" style="left:660px;top:348px;color:#4B5059">25</div>
<div class="ln" style="left:660px;top:370px;color:#4B5059">26</div>
<div class="ln" style="left:660px;top:392px;color:#4B5059">27</div>
<div class="ln" style="left:660px;top:414px;color:#4B5059">28</div>
<div class="ln" style="left:660px;top:436px;color:#4B5059">29</div>
<div class="ln" style="left:660px;top:458px;color:#4B5059">30</div>
<div class="ln" style="left:660px;top:480px;color:#4B5059">31</div>
<div class="ln" style="left:660px;top:502px;color:#4B5059">32</div>
<div class="ln" style="left:660px;top:524px;color:#4B5059">33</div>
<div class="ln" style="left:660px;top:546px;color:#4B5059">34</div>
<div class="ln" style="left:660px;top:568px;color:#4B5059">35</div>
<div class="ln" style="left:660px;top:590px;color:#4B5059">36</div>
<div class="ln" style="left:660px;top:612px;color:#4B5059">37</div>
<div class="ln" style="left:660px;top:634px;color:#4B5059">38</div>
<div class="ln" style="left:660px;top:656px;color:#4B5059">39</div>
<div class="ln" style="left:660px;top:678px;color:#4B5059">40</div>
<div class="ln" style="left:660px;top:700px;color:#4B5059">41</div>
<div class="ln" style="left:660px;top:722px;color:#4B5059">42</div>
<div class="a" style="left:841.5px;top:214px;width:176.5px;height:22px;background:#402D30"></div>
<div class="a" style="left:794.0px;top:130px;width:24px;height:22px;background:#393B40;height:22px;top:126px"></div>
<div class="code" style="left:794.0px;top:126.5px;color:#7A7E85">...</div>
<div class="a" style="left:768.0px;top:434px;width:1px;height:242px;background:#313438"></div>
<div class="a" style="left:800.0px;top:456px;width:1px;height:132px;background:#313438"></div>
<div class="a" style="left:800.0px;top:610px;width:1px;height:44px;background:#313438"></div>
<div class="code" style="left:738.0px;top:82.5px"><span class="kw">package</span> voll.med.api.controller;</div>
<div class="code" style="left:738.0px;top:126.5px"><span class="kw">import</span> </div>
<div class="code" style="left:738.0px;top:170.5px"><span class="an">@RestController</span></div>
<div class="code" style="left:738.0px;top:192.5px"><span class="an">@RequestMapping</span>(</div>
<div class="code" style="left:738.0px;top:214.5px"><span class="kw">public</span> <span class="kw">class</span> AutenticacaoController {</div>
<div class="code" style="left:738.0px;top:258.5px">    <span class="an">@Autowired</span></div>
<div class="code" style="left:738.0px;top:280.5px">    <span class="kw">private</span> AuthenticationManager <span class="fd">manager</span>;</div>
<div class="code" style="left:738.0px;top:324.5px">    <span class="an">@Autowired</span></div>
<div class="code" style="left:738.0px;top:346.5px">    <span class="kw">private</span> TokenService <span class="fd">tokenService</span>;</div>
<div class="code" style="left:738.0px;top:390.5px">    <span class="an">@PostMapping</span></div>
<div class="code" style="left:738.0px;top:412.5px">    <span class="kw">public</span> ResponseEntity <span class="md">efetuarLogin</span>(<span class="an">@RequestBody</span> <span class="an">@Valid</span> DadosAutenticacao dados) {</div>
<div class="code" style="left:738.0px;top:434.5px">        <span class="kw">try</span> {</div>
<div class="code" style="left:738.0px;top:456.5px">            <span class="kw">var</span> authenticationToken = <span class="kw">new</span> UsernamePasswordAuthenticationToken(dados.login(), dados.senha());</div>
<div class="code" style="left:738.0px;top:478.5px">            <span class="kw">var</span> authentication = <span class="fd">manager</span>.authenticate(authenticationToken);</div>
<div class="code" style="left:738.0px;top:522.5px">            <span class="kw">var</span> tokenJWT = <span class="fd">tokenService</span>.gerarToken((Usuario) authentication.getPrincipal());</div>
<div class="code" style="left:738.0px;top:566.5px">            <span class="kw">return</span> ResponseEntity.<span class="it">ok</span>(<span class="kw">new</span> DadosTokenJWT(tokenJWT));</div>
<div class="code" style="left:738.0px;top:588.5px">        } <span class="kw">catch</span> (Exception e) {</div>
<div class="code" style="left:738.0px;top:610.5px">            e.printStackTrace();</div>
<div class="code" style="left:738.0px;top:632.5px">            <span class="kw">return</span> ResponseEntity.<span class="it">badRequest</span>().body(e.getMessage());</div>
<div class="code" style="left:738.0px;top:654.5px">        }</div>
<div class="code" style="left:738.0px;top:676.5px">    }</div>
<div class="code" style="left:738.0px;top:698.5px">}</div>
<div class="a" style="left:865.8px;top:196.5px;width:21.5px;height:13px;background:#2B2D30;border-radius:3px"></div><svg style="left:865.8px;top:196.5px" width="21" height="13"><circle cx="6.5" cy="6.5" r="5.8" fill="none" stroke="#A0A3A9" stroke-width="1"/><ellipse cx="6.5" cy="6.5" rx="2.5" ry="5.8" fill="none" stroke="#A0A3A9" stroke-width="1"/><path d="M0.9 4.5 H12.1 M0.9 8.5 H12.1" stroke="#A0A3A9" stroke-width="1"/><path d="M14.5 5 L17.3 7.8 L20.1 5" fill="none" stroke="#8C8F94" stroke-width="1.1"/></svg>
<div class="code" style="left:887.3px;top:192.5px"><span class="st">&quot;</span><span class="st" style="text-decoration:underline;text-underline-offset:2px;text-decoration-color:#6AAB73">/login</span><span class="st">&quot;</span>)</div>
<div class="a" style="left:866.5px;top:394.5px;width:21.5px;height:13px;background:#2B2D30;border-radius:3px"></div><svg style="left:866.5px;top:394.5px" width="21" height="13"><circle cx="6.5" cy="6.5" r="5.8" fill="none" stroke="#A0A3A9" stroke-width="1"/><ellipse cx="6.5" cy="6.5" rx="2.5" ry="5.8" fill="none" stroke="#A0A3A9" stroke-width="1"/><path d="M0.9 4.5 H12.1 M0.9 8.5 H12.1" stroke="#A0A3A9" stroke-width="1"/><path d="M14.5 5 L17.3 7.8 L20.1 5" fill="none" stroke="#8C8F94" stroke-width="1.1"/></svg>
<svg style="left:873px;top:177.5px" width="9" height="8"><circle cx="4.5" cy="2" r="2" fill="#7A7E85"/><path d="M0.5 7.5 Q0.5 4.7 4.5 4.7 Q8.5 4.7 8.5 7.5 Z" fill="#7A7E85"/></svg><div class="t" style="left:884.5px;top:173.5px;font-size:12.5px;color:#7A7E85">Vitor</div>
<svg style="left:903.5px;top:397.5px" width="9" height="8"><circle cx="4.5" cy="2" r="2" fill="#7A7E85"/><path d="M0.5 7.5 Q0.5 4.7 4.5 4.7 Q8.5 4.7 8.5 7.5 Z" fill="#7A7E85"/></svg><div class="t" style="left:915.5px;top:393.5px;font-size:12.5px;color:#7A7E85">Vitor</div>
<div class="a" style="left:840.5px;top:216px;width:2px;height:18px;background:#CED0D6"></div>
<svg style="left:745px;top:191.5px" width="14" height="16"><circle cx="7" cy="6" r="5.1" fill="#F2C55C"/><path d="M5 11.5 H9 M5.3 13.3 H8.7" stroke="#DFE1E5" stroke-width="1"/></svg>
<svg style="left:0;top:0" width="1" height="1"><path d="M842.0 234.5 L844.0 232.5 L846.0 234.5 L848.0 232.5 L850.0 234.5 L852.0 232.5 L854.0 234.5 L856.0 232.5 L858.0 234.5 L860.0 232.5 L862.0 234.5 L864.0 232.5 L866.0 234.5 L868.0 232.5 L870.0 234.5 L872.0 232.5 L874.0 234.5 L876.0 232.5 L878.0 234.5 L880.0 232.5 L882.0 234.5 L884.0 232.5 L886.0 234.5 L888.0 232.5 L890.0 234.5 L892.0 232.5 L894.0 234.5 L896.0 232.5 L898.0 234.5 L900.0 232.5 L902.0 234.5 L904.0 232.5 L906.0 234.5 L908.0 232.5 L910.0 234.5 L912.0 232.5 L914.0 234.5 L916.0 232.5 L918.0 234.5 L920.0 232.5 L922.0 234.5 L924.0 232.5 L926.0 234.5 L928.0 232.5 L930.0 234.5 L932.0 232.5 L934.0 234.5 L936.0 232.5 L938.0 234.5" fill="none" stroke="#6AAB73" stroke-width="1.15"/></svg>
<svg style="left:0;top:0" width="1" height="1"><path d="M770.0 278.5 L772.0 276.5 L774.0 278.5 L776.0 276.5 L778.0 278.5 L780.0 276.5 L782.0 278.5 L784.0 276.5 L786.0 278.5 L788.0 276.5 L790.0 278.5 L792.0 276.5 L794.0 278.5 L796.0 276.5 L798.0 278.5 L800.0 276.5 L802.0 278.5 L804.0 276.5 L806.0 278.5 L808.0 276.5 L810.0 278.5 L812.0 276.5 L814.0 278.5 L816.0 276.5 L818.0 278.5 L820.0 276.5 L822.0 278.5 L824.0 276.5 L826.0 278.5 L828.0 276.5 L830.0 278.5 L832.0 276.5 L834.0 278.5 L836.0 276.5 L838.0 278.5 L840.0 276.5 L842.0 278.5 L844.0 276.5 L846.0 278.5 L848.0 276.5 L850.0 278.5" fill="none" stroke="#D9B350" stroke-width="1.15"/></svg>
<svg style="left:0;top:0" width="1" height="1"><path d="M770.0 344.5 L772.0 342.5 L774.0 344.5 L776.0 342.5 L778.0 344.5 L780.0 342.5 L782.0 344.5 L784.0 342.5 L786.0 344.5 L788.0 342.5 L790.0 344.5 L792.0 342.5 L794.0 344.5 L796.0 342.5 L798.0 344.5 L800.0 342.5 L802.0 344.5 L804.0 342.5 L806.0 344.5 L808.0 342.5 L810.0 344.5 L812.0 342.5 L814.0 344.5 L816.0 342.5 L818.0 344.5 L820.0 342.5 L822.0 344.5 L824.0 342.5 L826.0 344.5 L828.0 342.5 L830.0 344.5 L832.0 342.5 L834.0 344.5 L836.0 342.5 L838.0 344.5 L840.0 342.5 L842.0 344.5 L844.0 342.5 L846.0 344.5 L848.0 342.5 L850.0 344.5" fill="none" stroke="#D9B350" stroke-width="1.15"/></svg>
<svg style="left:0;top:0" width="1" height="1"><path d="M826.0 432.5 L828.0 430.5 L830.0 432.5 L832.0 430.5 L834.0 432.5 L836.0 430.5 L838.0 432.5 L840.0 430.5 L842.0 432.5 L844.0 430.5 L846.0 432.5 L848.0 430.5 L850.0 432.5 L852.0 430.5 L854.0 432.5 L856.0 430.5 L858.0 432.5 L860.0 430.5 L862.0 432.5 L864.0 430.5 L866.0 432.5 L868.0 430.5 L870.0 432.5 L872.0 430.5 L874.0 432.5 L876.0 430.5 L878.0 432.5 L880.0 430.5 L882.0 432.5 L884.0 430.5 L886.0 432.5 L888.0 430.5 L890.0 432.5 L892.0 430.5 L894.0 432.5 L896.0 430.5 L898.0 432.5 L900.0 430.5 L902.0 432.5 L904.0 430.5 L906.0 432.5 L908.0 430.5 L910.0 432.5 L912.0 430.5 L914.0 432.5 L916.0 430.5 L918.0 432.5 L920.0 430.5 L922.0 432.5 L924.0 430.5 L926.0 432.5 L928.0 430.5 L930.0 432.5 L932.0 430.5 L934.0 432.5 L936.0 430.5 L938.0 432.5" fill="none" stroke="#D9B350" stroke-width="1.15"/></svg>
<svg style="left:0;top:0" width="1" height="1"><path d="M946.0 432.5 L948.0 430.5 L950.0 432.5 L952.0 430.5 L954.0 432.5 L956.0 430.5 L958.0 432.5 L960.0 430.5 L962.0 432.5 L964.0 430.5 L966.0 432.5 L968.0 430.5 L970.0 432.5 L972.0 430.5 L974.0 432.5 L976.0 430.5 L978.0 432.5 L980.0 430.5 L982.0 432.5 L984.0 430.5 L986.0 432.5 L988.0 430.5 L990.0 432.5 L992.0 430.5 L994.0 432.5 L996.0 430.5 L998.0 432.5 L1000.0 430.5 L1002.0 432.5" fill="none" stroke="#6AAB73" stroke-width="1.15"/></svg>
<svg style="left:0;top:0" width="1" height="1"><path d="M1354.0 432.5 L1356.0 430.5 L1358.0 432.5 L1360.0 430.5 L1362.0 432.5 L1364.0 430.5 L1366.0 432.5 L1368.0 430.5 L1370.0 432.5 L1372.0 430.5 L1374.0 432.5 L1376.0 430.5 L1378.0 432.5 L1380.0 430.5 L1382.0 432.5 L1384.0 430.5 L1386.0 432.5 L1388.0 430.5 L1390.0 432.5 L1392.0 430.5 L1394.0 432.5" fill="none" stroke="#6AAB73" stroke-width="1.15"/></svg>
<svg style="left:0;top:0" width="1" height="1"><path d="M850.0 630.5 L852.0 628.5 L854.0 630.5 L856.0 628.5 L858.0 630.5 L860.0 628.5 L862.0 630.5 L864.0 628.5 L866.0 630.5 L868.0 628.5 L870.0 630.5 L872.0 628.5 L874.0 630.5 L876.0 628.5 L878.0 630.5 L880.0 628.5 L882.0 630.5 L884.0 628.5 L886.0 630.5 L888.0 628.5 L890.0 630.5 L892.0 628.5 L894.0 630.5 L896.0 628.5 L898.0 630.5 L900.0 628.5 L902.0 630.5 L904.0 628.5 L906.0 630.5 L908.0 628.5 L910.0 630.5 L912.0 628.5 L914.0 630.5 L916.0 628.5 L918.0 630.5 L920.0 628.5 L922.0 630.5 L924.0 628.5 L926.0 630.5 L928.0 628.5 L930.0 630.5 L932.0 628.5 L934.0 630.5 L936.0 628.5 L938.0 630.5 L940.0 628.5 L942.0 630.5 L944.0 628.5 L946.0 630.5 L948.0 628.5 L950.0 630.5 L952.0 628.5 L954.0 630.5 L956.0 628.5 L958.0 630.5 L960.0 628.5 L962.0 630.5 L964.0 628.5 L966.0 630.5 L968.0 628.5 L970.0 630.5" fill="none" stroke="#D9B350" stroke-width="1.15"/></svg>
<svg style="left:726.5px;top:133px" width="4.0" height="8"><path d="M0.5 0.5 L3.7 4.0 L0.5 7.5" fill="none" stroke="#8C8F94" stroke-width="1.1"/></svg>
<svg style="left:705px;top:218px" width="16" height="16"><circle cx="7" cy="7" r="6.3" fill="#253627" stroke="#5FB865" stroke-width="1.1"/><path d="M3 3 L11 11" stroke="#5FB865" stroke-width="1.1"/><path d="M14.5 10.5 V14.5 H10.5 Z" fill="#DFE1E5"/></svg>
<svg style="left:705px;top:284px" width="16" height="16"><circle cx="7" cy="7" r="6.3" fill="#253627" stroke="#5FB865" stroke-width="1.1"/><path d="M3 3 L11 11" stroke="#5FB865" stroke-width="1.1"/><path d="M5 10.5 H14 M10.5 7 L14 10.5 L10.5 14" fill="none" stroke="#1E1F22" stroke-width="3"/><path d="M5 10.5 H14 M10.5 7 L14 10.5 L10.5 14" fill="none" stroke="#DFE1E5" stroke-width="1.3"/></svg>
<svg style="left:705px;top:350px" width="16" height="16"><circle cx="7" cy="7" r="6.3" fill="#253627" stroke="#5FB865" stroke-width="1.1"/><path d="M3 3 L11 11" stroke="#5FB865" stroke-width="1.1"/><path d="M5 10.5 H14 M10.5 7 L14 10.5 L10.5 14" fill="none" stroke="#1E1F22" stroke-width="3"/><path d="M5 10.5 H14 M10.5 7 L14 10.5 L10.5 14" fill="none" stroke="#DFE1E5" stroke-width="1.3"/></svg>
<svg style="left:705px;top:416px" width="16" height="16"><circle cx="7" cy="7" r="6.3" fill="#253627" stroke="#5FB865" stroke-width="1.1"/><path d="M3 3 L11 11" stroke="#5FB865" stroke-width="1.1"/><circle cx="10" cy="9.5" r="4.6" fill="#DFE1E5" stroke="#1E1F22" stroke-width="1.2"/><path d="M6.5 8.3 H13.5 M6.5 10.7 H13.5 M8.8 5.5 V13.5 M11.2 5.5 V13.5" stroke="#8C8F94" stroke-width="0.6"/></svg>
<svg style="left:1741px;top:89px" width="13" height="11"><path d="M6.5 0.5 L12.5 10.5 H0.5 Z" fill="#E0B653" stroke="#E0B653" stroke-linejoin="round"/><path d="M6.5 3.5 V7" stroke="#1E1F22" stroke-width="1.4"/><rect x="5.8" y="8" width="1.4" height="1.4" fill="#1E1F22"/></svg>
<div class="t" style="left:1756px;top:87px;font-size:13px;color:#DFE1E5">2</div>
<svg style="left:1772px;top:89px" width="13" height="11"><path d="M6.5 0.5 L12.5 10.5 H0.5 Z" fill="#9F8A57" stroke="#9F8A57" stroke-linejoin="round"/><path d="M6.5 3.5 V7" stroke="#1E1F22" stroke-width="1.4"/><rect x="5.8" y="8" width="1.4" height="1.4" fill="#1E1F22"/></svg>
<div class="t" style="left:1787px;top:87px;font-size:13px;color:#DFE1E5">2</div>
<svg style="left:1803px;top:89px" width="12" height="14"><path d="M1 5 L4.5 8.5 L11 1.5" fill="none" stroke="#5FB865" stroke-width="1.8"/><path d="M0.5 13 L2.5 11 L4.5 13 L6.5 11 L8.5 13 L10.5 11" fill="none" stroke="#5FB865" stroke-width="0.9"/></svg>
<div class="t" style="left:1818px;top:87px;font-size:13px;color:#DFE1E5">3</div>
<svg style="left:1837px;top:92px" width="9" height="5"><path d="M0.5 4.5 L4.5 0.5 L8.5 4.5" fill="none" stroke="#CED0D6" stroke-width="1"/></svg>
<svg style="left:1857.5px;top:93px" width="8.5" height="4.25"><path d="M0.5 0.5 L4.25 3.95 L8.0 0.5" fill="none" stroke="#CED0D6" stroke-width="1"/></svg>
<div class="a" style="left:1860px;top:240px;width:14px;height:2px;background:#C96E98"></div>
<div class="a" style="left:1860px;top:438px;width:14px;height:2px;background:#D6AD4E"></div>
<div class="a" style="left:1860px;top:636px;width:14px;height:2px;background:#D6AD4E"></div>
<div class="a" style="left:1874px;top:41px;width:1px;height:962px;background:#1E1F22"></div>
<div class="a" style="left:1875px;top:41px;width:29px;height:962px;background:#2B2D30"></div>
<svg style="left:1886px;top:51px" width="20" height="20"><path d="M1.5 15 Q3.5 13 3.5 10 V8 Q3.5 2.5 9 2.5 Q14.5 2.5 14.5 8 V10 Q14.5 13 16.5 15 Z" fill="none" stroke="#CED0D6" stroke-width="1.3" stroke-linejoin="round"/><path d="M7.5 17.3 H10.5" stroke="#CED0D6" stroke-width="1.4"/><circle cx="15.5" cy="3.8" r="4.6" fill="#2B2D30"/><circle cx="15.5" cy="3.8" r="3.6" fill="#E05A64"/></svg>
<svg style="left:1886px;top:92px" width="18" height="17"><path d="M16.5 12.5 Q13 15.5 8.5 15.5 Q1.5 15.5 1.5 9 Q1.5 3 8 3 Q13.5 3 13.5 8 Q13.5 12 9 12 Q5.5 12 5.5 9 Q5.5 6.5 8.5 6.5 Q10 6.5 10 8.5" fill="none" stroke="#CED0D6" stroke-width="1.3"/></svg>
<svg style="left:1886px;top:132px" width="18" height="18"><ellipse cx="8.5" cy="3.5" rx="7" ry="2.5" fill="none" stroke="#CED0D6" stroke-width="1.3"/><path d="M1.5 3.5 V14 Q1.5 16.5 8.5 16.5 Q15.5 16.5 15.5 14 V3.5 M1.5 7 Q1.5 9.5 8.5 9.5 Q15.5 9.5 15.5 7 M1.5 10.5 Q1.5 13 8.5 13 Q15.5 13 15.5 10.5" fill="none" stroke="#CED0D6" stroke-width="1.3"/></svg>
<div class="t" style="left:1886px;top:168.5px;font-size:23px;line-height:22px;font-style:italic;color:#CED0D6">m</div>
<div class="a" style="left:0px;top:1002px;width:1904px;height:1px;background:#1E1F22"></div>
<div class="a" style="left:0px;top:1003px;width:1904px;height:29px;background:#2B2D30"></div>
<svg style="left:9px;top:1013px" width="8" height="8"><rect x="0.6" y="0.6" width="6.8" height="6.8" rx="1.5" fill="#25324D" stroke="#548AF7" stroke-width="1.2"/></svg>
<div class="t" style="left:21px;top:1009px;color:#A9ACB2">api</div>
<div class="t" style="left:63px;top:1009px;color:#A9ACB2">src</div>
<div class="t" style="left:106px;top:1009px;color:#A9ACB2">main</div>
<div class="t" style="left:158px;top:1009px;color:#A9ACB2">java</div>
<div class="t" style="left:207px;top:1009px;color:#A9ACB2">voll</div>
<div class="t" style="left:252px;top:1009px;color:#A9ACB2">med</div>
<div class="t" style="left:303px;top:1009px;color:#A9ACB2">api</div>
<div class="t" style="left:345px;top:1009px;color:#A9ACB2">controller</div>
<svg style="left:48px;top:1012.8px" width="4.5" height="9"><path d="M0.5 0.5 L4.2 4.5 L0.5 8.5" fill="none" stroke="#9DA0A6" stroke-width="1.15"/></svg>
<svg style="left:91.6px;top:1012.8px" width="4.5" height="9"><path d="M0.5 0.5 L4.2 4.5 L0.5 8.5" fill="none" stroke="#9DA0A6" stroke-width="1.15"/></svg>
<svg style="left:144.5px;top:1012.8px" width="4.5" height="9"><path d="M0.5 0.5 L4.2 4.5 L0.5 8.5" fill="none" stroke="#9DA0A6" stroke-width="1.15"/></svg>
<svg style="left:192.4px;top:1012.8px" width="4.5" height="9"><path d="M0.5 0.5 L4.2 4.5 L0.5 8.5" fill="none" stroke="#9DA0A6" stroke-width="1.15"/></svg>
<svg style="left:237.8px;top:1012.8px" width="4.5" height="9"><path d="M0.5 0.5 L4.2 4.5 L0.5 8.5" fill="none" stroke="#9DA0A6" stroke-width="1.15"/></svg>
<svg style="left:288.2px;top:1012.8px" width="4.5" height="9"><path d="M0.5 0.5 L4.2 4.5 L0.5 8.5" fill="none" stroke="#9DA0A6" stroke-width="1.15"/></svg>
<svg style="left:329.9px;top:1012.8px" width="4.5" height="9"><path d="M0.5 0.5 L4.2 4.5 L0.5 8.5" fill="none" stroke="#9DA0A6" stroke-width="1.15"/></svg>
<svg style="left:414.3px;top:1012.8px" width="4.5" height="9"><path d="M0.5 0.5 L4.2 4.5 L0.5 8.5" fill="none" stroke="#9DA0A6" stroke-width="1.15"/></svg>
<svg style="left:429px;top:1009px" width="16" height="16"><circle cx="7.5" cy="7.5" r="6.6" fill="#25324D" stroke="#548AF7" stroke-width="1.1"/><path d="M9.5 5.6 A2.75 2.75 0 1 0 9.5 9.4" fill="none" stroke="#548AF7" stroke-width="1"/></svg>
<div class="t" style="left:449px;top:1009px;color:#A9ACB2">AutenticacaoController</div>
<div class="t" style="left:1653px;top:1009.5px;font-size:13px;color:#A9ACB2">19:14</div>
<div class="t" style="left:1701px;top:1009.5px;font-size:13px;color:#A9ACB2">CRLF</div>
<div class="t" style="left:1749px;top:1009px;font-size:14px;color:#A9ACB2">UTF-8</div>
<div class="t" style="left:1810px;top:1009px;font-size:14px;color:#A9ACB2">4 spaces</div>
<svg style="left:1883.5px;top:1010px" width="14" height="14"><rect x="0.7" y="6" width="10" height="7.3" rx="1.3" fill="none" stroke="#CED0D6" stroke-width="1.2"/><path d="M7 6 V4 Q7 1 10 1 Q13 1 13 4 V5" fill="none" stroke="#CED0D6" stroke-width="1.2"/><rect x="5" y="8.8" width="1.6" height="2" fill="#CED0D6"/></svg>
<div class="a" style="left:0px;top:1032px;width:1904px;height:1px;background:#45454F"></div>
<div class="a" style="left:0px;top:1033px;width:1904px;height:2px;background:linear-gradient(90deg,#1C1D30,#2A1E2C 50%,#2B1C24)"></div>
</body></html>
